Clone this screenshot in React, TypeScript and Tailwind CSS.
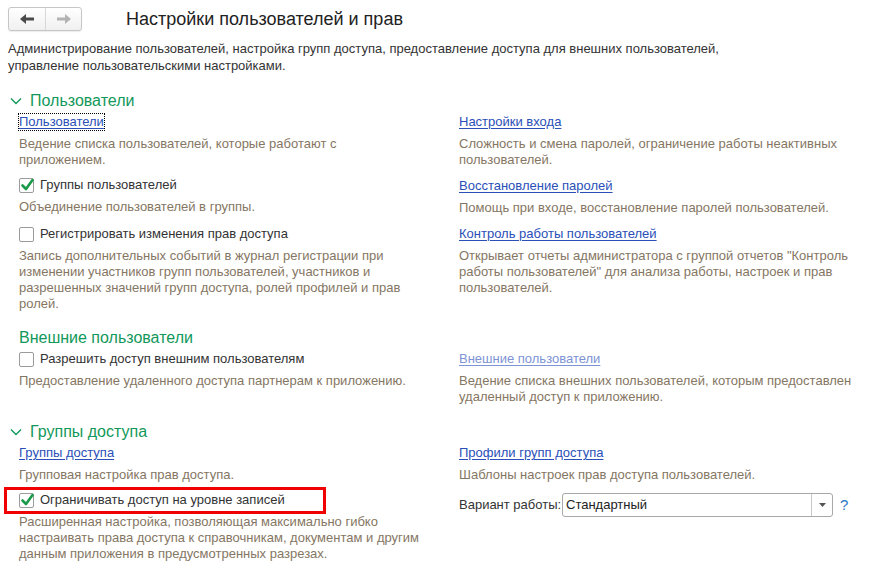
import React from 'react';

const FONT = "font-['Liberation_Sans',Arial,sans-serif]";

function Chevron() {
  return (
    <svg width="12" height="8" viewBox="0 0 12 8" className="mr-[8px]">
      <path d="M1 1.5 L6 6.5 L11 1.5" fill="none" stroke="#12985a" strokeWidth="1.4" />
    </svg>
  );
}

function SectionHeader({ title, chevron = false }: { title: string; chevron?: boolean }) {
  return (
    <div className={`flex h-[22px] items-center text-[16px] text-[#12985a] ${chevron ? 'pl-[10px]' : 'pl-[19px]'}`}>
      {chevron && <Chevron />}
      <span>{title}</span>
    </div>
  );
}

function Desc({ children }: { children: React.ReactNode }) {
  return <div className="mt-1 text-[13px] leading-4 text-[#857663]">{children}</div>;
}

function LinkRow({ text, focused = false, disabled = false }: { text: string; focused?: boolean; disabled?: boolean }) {
  return (
    <div className="flex h-5 items-center">
      <a
        href="#"
        className={`text-[13px] leading-4 underline underline-offset-2 ${
          disabled ? 'text-[#7d93d5] decoration-[#7d93d5]' : 'text-[#2a4fb8] decoration-[#2a4fb8]'
        } ${focused ? 'outline outline-1 outline-dotted outline-black' : ''}`}
      >
        {text}
      </a>
    </div>
  );
}

function Checkbox({ checked }: { checked: boolean }) {
  return (
    <span className="relative inline-block h-[15px] w-[15px] shrink-0 rounded-[2px] border border-[#9b9b9b] bg-white">
      {checked && (
        <svg width="15" height="14" viewBox="0 0 15 14" className="absolute left-[0px] top-[-1px]">
          <path d="M2.5 7.5 L6 11 L12.5 2" fill="none" stroke="#1b9a4a" strokeWidth="2.6" strokeLinecap="round" strokeLinejoin="round" />
        </svg>
      )}
    </span>
  );
}

function CheckRow({ label, checked }: { label: string; checked: boolean }) {
  return (
    <div className="flex h-5 items-center gap-[6px]">
      <Checkbox checked={checked} />
      <span className="text-[13px] leading-4 text-[#333]">{label}</span>
    </div>
  );
}

function Arrow({ dir, color }: { dir: 'left' | 'right'; color: string }) {
  return (
    <svg width="14" height="12" viewBox="0 0 14 12" style={{ transform: dir === 'right' ? 'scaleX(-1)' : undefined }}>
      <polygon points="0,6 6,1 6,11" fill={color} />
      <rect x="5" y="4.5" width="9" height="3" fill={color} />
    </svg>
  );
}

export default function App() {
  return (
    <div className={`${FONT} h-[570px] w-[894px] overflow-hidden bg-white pt-[7px]`}>
      {/* top bar */}
      <div className="flex h-6 items-center pl-2">
        <div className="flex h-6 w-[74px] rounded-[3px] border border-[#c6c6c6] bg-gradient-to-b from-white to-[#f0f0f0] shadow-[0_1px_1px_rgba(0,0,0,0.08)]">
          <button type="button" className="flex w-[37px] items-center justify-center border-r border-[#d8d8d8]">
            <Arrow dir="left" color="#4a4a4a" />
          </button>
          <button type="button" className="flex flex-1 items-center justify-center">
            <Arrow dir="right" color="#b3b3b3" />
          </button>
        </div>
        <h1 className="ml-[44px] text-[18px] text-[#222]">Настройки пользователей и прав</h1>
      </div>

      <p className="mt-[9px] w-[760px] pl-2 text-[13px] leading-[17px] text-[#333]">
        Администрирование пользователей, настройка групп доступа, предоставление доступа для внешних пользователей,
        управление пользовательскими настройками.
      </p>

      {/* Пользователи */}
      <div className="mt-[16px]">
        <SectionHeader title="Пользователи" chevron />
        <div className="grid grid-cols-[440px_400px] pl-[19px]">
          <div className="w-[402px]">
            <LinkRow text="Пользователи" focused />
            <Desc>Ведение списка пользователей, которые работают с приложением.</Desc>
            <div className="mt-[7px]">
              <CheckRow label="Группы пользователей" checked />
              <Desc>Объединение пользователей в группы.</Desc>
            </div>
            <div className="mt-[9px]">
              <CheckRow label="Регистрировать изменения прав доступа" checked={false} />
              <Desc>
                Запись дополнительных событий в журнал регистрации при изменении участников групп пользователей,
                участников и разрешенных значений групп доступа, ролей профилей и прав ролей.
              </Desc>
            </div>
          </div>
          <div>
            <LinkRow text="Настройки входа" />
            <Desc>Сложность и смена паролей, ограничение работы неактивных пользователей.</Desc>
            <div className="mt-2">
              <LinkRow text="Восстановление паролей" />
              <Desc>Помощь при входе, восстановление паролей пользователей.</Desc>
            </div>
            <div className="mt-2">
              <LinkRow text="Контроль работы пользователей" />
              <Desc>
                Открывает отчеты администратора с группой отчетов "Контроль работы пользователей" для анализа
                работы, настроек и прав пользователей.
              </Desc>
            </div>
          </div>
        </div>
      </div>

      {/* Внешние пользователи */}
      <div className="mt-[15px]">
        <SectionHeader title="Внешние пользователи" />
        <div className="grid grid-cols-[440px_400px] pl-[19px]">
          <div className="w-[402px]">
            <CheckRow label="Разрешить доступ внешним пользователям" checked={false} />
            <Desc>Предоставление удаленного доступа партнерам к приложению.</Desc>
          </div>
          <div>
            <LinkRow text="Внешние пользователи" disabled />
            <Desc>Ведение списка внешних пользователей, которым предоставлен удаленный доступ к приложению.</Desc>
          </div>
        </div>
      </div>

      {/* Группы доступа */}
      <div className="mt-[16px]">
        <SectionHeader title="Группы доступа" chevron />
        <div className="grid grid-cols-[440px_400px] pl-[19px]">
          <div className="w-[402px]">
            <LinkRow text="Группы доступа" />
            <Desc>Групповая настройка прав доступа.</Desc>
            <div className="relative mt-[7px]">
              <CheckRow label="Ограничивать доступ на уровне записей" checked />
              <div className="pointer-events-none absolute left-[-15px] top-[-3px] h-[27px] w-[322px] border-[3px] border-[#f00000]" />
              <Desc>
                Расширенная настройка, позволяющая максимально гибко настраивать права доступа к справочникам,
                документам и другим данным приложения в предусмотренных разрезах.
              </Desc>
            </div>
          </div>
          <div>
            <LinkRow text="Профили групп доступа" />
            <Desc>Шаблоны настроек прав доступа пользователей.</Desc>
            <div className="mt-[10px] flex h-6 items-center">
              <span className="w-[103px] text-[13px] text-[#333]">Вариант работы:</span>
              <div className="flex h-6 w-[271px] rounded-[3px] border border-[#a8a8a8] bg-white">
                <span className="flex-1 pl-[3px] text-[13px] leading-[22px] text-[#222]">Стандартный</span>
                <span className="flex w-[21px] items-center justify-center border-l border-[#c8c8c8]">
                  <svg width="7" height="4" viewBox="0 0 7 4">
                    <polygon points="0,0 7,0 3.5,4" fill="#555" />
                  </svg>
                </span>
              </div>
              <span className="ml-[7px] text-[15px] text-[#2b78c4]">?</span>
            </div>
          </div>
        </div>
      </div>
    </div>
  );
}
